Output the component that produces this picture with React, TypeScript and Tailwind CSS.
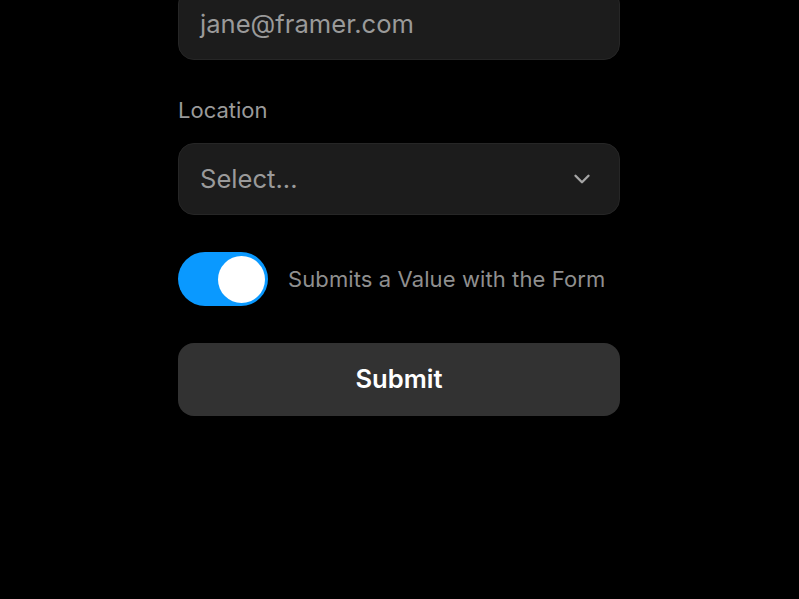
import { ChevronDown } from "lucide-react";

const font = { fontFamily: "Inter, 'Noto Sans', sans-serif" };

function Toggle({ on }: { on: boolean }) {
  return (
    <div className={`flex h-[54px] w-[90px] items-center rounded-full px-[3px] ${on ? "justify-end bg-[#0a99ff]" : "justify-start bg-[#333]"}`}>
      <div className="h-[47px] w-[47px] rounded-full bg-white" />
    </div>
  );
}

export default function App() {
  return (
    <div className="min-h-[599px] w-full overflow-hidden bg-black" style={font}>
      <div className="ml-[178px] flex w-[442px] flex-col">
        {/* email */}
        <div className="-mt-[12px] flex h-[72px] items-center rounded-[16px] border border-[#262626] bg-[#1c1c1c] px-[21px] text-[25.6px] text-[#9a9a9a]">
          jane@framer.com
        </div>

        {/* location */}
        <div className="mt-[37px] h-[26px] text-[22px] leading-[26px] text-[#9a9a9a]">Location</div>
        <div className="mt-[20px] flex h-[72px] items-center justify-between rounded-[16px] border border-[#262626] bg-[#1c1c1c] pl-[21px] pr-[24px] text-[25.6px] text-[#9a9a9a]">
          <span>Select...</span>
          <ChevronDown size={26} strokeWidth={2.2} color="#a5a5a5" />
        </div>

        {/* toggle */}
        <div className="mt-[37px] flex items-center gap-[20px]">
          <Toggle on />
          <span className="text-[22px] tracking-[0.1px] text-[#8f8f8f]">Submits a Value with the Form</span>
        </div>

        {/* submit */}
        <button className="mt-[37px] flex h-[73px] items-center justify-center rounded-[16px] bg-[#323232] text-[25.6px] font-semibold text-white">
          Submit
        </button>
      </div>
    </div>
  );
}
